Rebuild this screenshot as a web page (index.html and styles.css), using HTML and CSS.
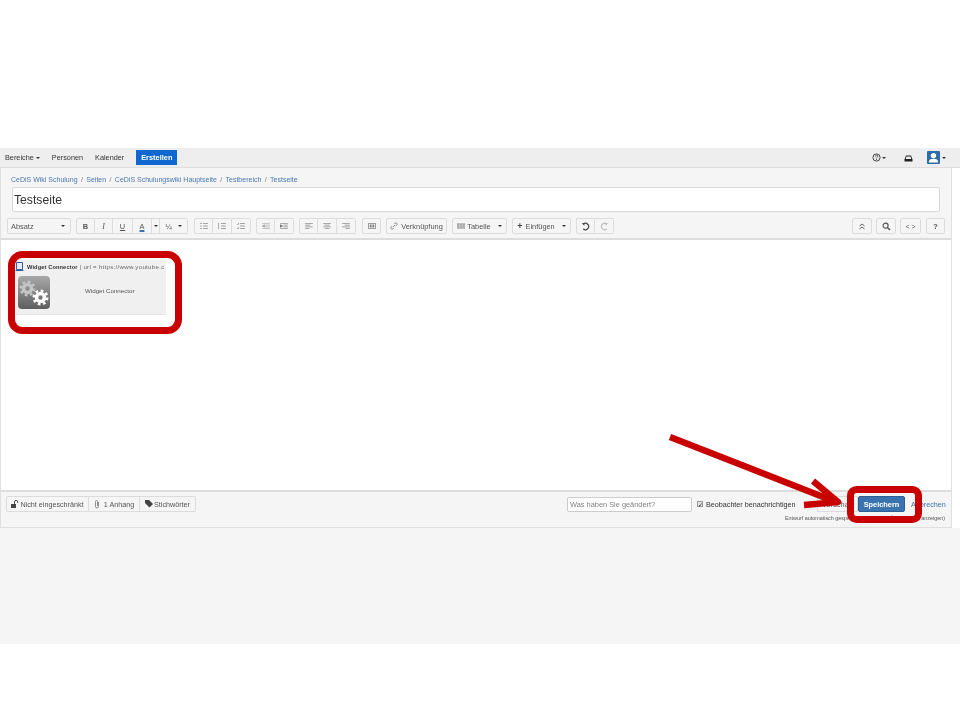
FILE: index.html
```html
<!DOCTYPE html>
<html lang="de">
<head>
<meta charset="utf-8">
<title>Testseite bearbeiten</title>
<link rel="stylesheet" href="styles.css">
</head>
<body>
<div class="top-space"></div>
<div class="app">
  <nav class="nav">
    <a class="nav-item nav-first">Bereiche <i class="caret"></i></a>
    <a class="nav-item">Personen</a>
    <a class="nav-item">Kalender</a>
    <a class="create">Erstellen</a>
    <div class="nav-right">
      <svg class="ic-help" viewBox="0 0 10 10"><circle cx="5" cy="5" r="4" fill="none" stroke="#333" stroke-width="1"/><path d="M3.6 4c0-2 2.9-2 2.9-.3C6.500 4.800 5 4.700 5 6" fill="none" stroke="#333" stroke-width=".9"/><rect x="4.500" y="6.600" width="1" height="1" fill="#333"/></svg>
      <i class="caret"></i>
      <svg class="ic-inbox" viewBox="0 0 9 7"><path d="M2 .5h5l1.500 4v2H.5v-2z" fill="#222"/><path d="M2.500 1.500h4l.8 2.500H1.700z" fill="#eee"/></svg>
      <svg class="ic-user" viewBox="0 0 13 13"><rect width="13" height="13" rx="1" fill="#2d6ca8"/><circle cx="6.500" cy="4.600" r="2.700" fill="#fff"/><path d="M1.800 11.500c0-3.200 2.500-3.800 4.700-3.800s4.700.6 4.700 3.800z" fill="#fff"/></svg>
      <i class="caret"></i>
    </div>
  </nav>
  <main class="editor">
    <div class="head">
      <div class="crumbs">
        <a>CeDiS Wiki Schulung</a><span>/</span><a>Seiten</a><span>/</span><a>CeDiS Schulungswiki Hauptseite</a><span>/</span><a>Testbereich</a><span>/</span><a>Testseite</a>
      </div>
      <div class="title">Testseite</div>
      <div class="toolbar">
        <div class="btn select">Absatz<i class="caret"></i></div>
        <div class="group g-first">
          <div class="btn b19 bold">B</div>
          <div class="btn b18 ital">I</div>
          <div class="btn b20 under">U</div>
          <div class="btn b19 color">A</div>
          <div class="btn b8"><i class="caret"></i></div>
          <div class="btn b28 frac">¼<i class="caret"></i></div>
        </div>
        <div class="group g-list">
          <div class="btn b19"><svg class="tool" viewBox="0 0 9 7"><path d="M0 .5h2M0 3.500h2M0 6.500h2M3.500 .5h5.500M3.500 3.500h5.500M3.500 6.500h5.500" stroke="#707070"/></svg></div>
          <div class="btn b19"><svg class="tool" viewBox="0 0 9 7"><path d="M.5 0v2M.5 2.500v2M.5 5v2M3.500 .5h5.500M3.500 3.500h5.500M3.500 6.500h5.500" stroke="#707070"/></svg></div>
          <div class="btn b19"><svg class="tool" viewBox="0 0 9 7"><path d="M0 1l1 1 1-2M0 6l1 1 1-2M3.500 .5h5.500M3.500 3.500h5.500M3.500 6.500h5.500" stroke="#707070" fill="none"/></svg></div>
        </div>
        <div class="group g-indent">
          <div class="btn b19"><svg class="tool faint" viewBox="0 0 9 7"><path d="M0 .5h9M4 2.500h5M4 4.500h5M0 6.500h9M3 2L0 3.500 3 5z" stroke="#707070" stroke-width=".9"/></svg></div>
          <div class="btn b19"><svg class="tool" viewBox="0 0 9 7"><path d="M0 .5h9M4 2.500h5M4 4.500h5M0 6.500h9M0 2l3 1.500L0 5z" stroke="#707070" stroke-width=".9"/></svg></div>
        </div>
        <div class="group g-align">
          <div class="btn b19"><svg class="tool" viewBox="0 0 9 7"><path d="M0 .5h9M0 2.500h6M0 4.500h9M0 6.500h5" stroke="#808080"/></svg></div>
          <div class="btn b19"><svg class="tool" viewBox="0 0 9 7"><path d="M0 .5h9M1.500 2.500h6M0 4.500h9M2 6.500h5" stroke="#808080"/></svg></div>
          <div class="btn b19"><svg class="tool" viewBox="0 0 9 7"><path d="M0 .5h9M3 2.500h6M0 4.500h9M4 6.500h5" stroke="#808080"/></svg></div>
        </div>
        <div class="btn b19 single g-layout"><svg class="tool" viewBox="0 0 10 8"><rect x=".5" y=".5" width="9" height="7" fill="none" stroke="#666"/><path d="M2 2h2.500v4H2zM5.500 2H8v4H5.500z" fill="#666"/></svg></div>
        <div class="btn single link"><svg class="tool-s" viewBox="0 0 8 8"><path d="M3 5l2-2M2.200 4L1 5.200a1.300 1.300 0 0 0 1.800 1.800L4 5.800M4 2.200L5.200 1A1.300 1.300 0 0 1 7 2.800L5.800 4" fill="none" stroke="#666" stroke-width=".7"/></svg>Verknüpfung</div>
        <div class="btn single table"><svg class="tool" viewBox="0 0 9 6"><path d="M0 0h9v6H0z" fill="#8a8a8a"/><path d="M3 0v6M6 0v6M0 2h9M0 4h9" stroke="#eee" stroke-width=".4"/></svg>Tabelle<i class="caret"></i></div>
        <div class="btn single insert"><b>+</b>Einfügen<i class="caret"></i></div>
        <div class="group g-undo">
          <div class="btn b19"><svg class="tool-u" viewBox="0 0 10 10"><path d="M2.500 2.500a3.500 3.500 0 1 1 0 5" fill="none" stroke="#444" stroke-width="1.300"/><path d="M1 1l3 .2-.4 3z" fill="#444"/></svg></div>
          <div class="btn b19"><svg class="tool-u" viewBox="0 0 10 10"><path d="M7.500 2.500a3.500 3.500 0 1 0 0 5" fill="none" stroke="#bbb" stroke-width="1.200"/><path d="M9 1l-3 .2.400 3z" fill="#bbb"/></svg></div>
        </div>
        <div class="tool-right">
          <div class="btn b20 single"><svg class="tool-s" viewBox="0 0 8 8"><path d="M1.500 4L4 2l2.500 2M1.500 7L4 5l2.500 2" fill="none" stroke="#666"/></svg></div>
          <div class="btn b20 single"><svg class="tool-u" viewBox="0 0 10 10"><circle cx="4" cy="4" r="2.800" fill="none" stroke="#555" stroke-width="1.300"/><path d="M6 6l3 3" stroke="#555" stroke-width="1.600"/></svg></div>
          <div class="btn b21 single code">&lt; &gt;</div>
          <div class="btn b19 single help">?</div>
        </div>
      </div>
    </div>
    <div class="content">
      <div class="macro">
        <div class="macro-head">
          <svg class="macro-book" viewBox="0 0 9 9"><path d="M1.500 .5h6v7h-6z" fill="#e8eef6" stroke="#2f5f9e"/><path d="M.5 8.500h8" stroke="#2f5f9e"/></svg>
          <span class="macro-text"><b>Widget Connector</b> | url = https://www.youtube.c</span>
        </div>
        <div class="macro-body">
          <svg class="macro-icon" viewBox="0 0 32 33">
            <defs><linearGradient id="grad" x1="0" y1="0" x2="0" y2="1"><stop offset="0" stop-color="#a9a9a9"/><stop offset="1" stop-color="#5e5e5e"/></linearGradient></defs>
            <rect width="32" height="33" rx="4" fill="url(#grad)"/>
            <circle cx="9.500" cy="12.500" r="4" fill="none" stroke="#c4c4c4" stroke-width="3.600"/>
            <circle cx="9.500" cy="12.500" r="6.800" fill="none" stroke="#c4c4c4" stroke-width="2.400" stroke-dasharray="2.700 2.640"/>
            <circle cx="22.500" cy="21.500" r="4" fill="none" stroke="#fff" stroke-width="3.600"/>
            <circle cx="22.500" cy="21.500" r="6.800" fill="none" stroke="#fff" stroke-width="2.400" stroke-dasharray="2.700 2.640"/>
          </svg>
          <span class="macro-name">Widget Connector</span>
        </div>
      </div>
    </div>
    <footer class="foot">
      <div class="foot-left">
        <div class="btn f-restrict"><svg class="tool-s" viewBox="0 0 8 8"><path d="M0 4h5v4H0z" fill="#444"/><path d="M3.500 4V2a1.600 1.600 0 0 1 3.200 0v1" fill="none" stroke="#555"/></svg>Nicht eingeschränkt</div>
        <div class="btn f-attach"><svg class="tool-clip" viewBox="0 0 6 10"><path d="M4.500 3v4.500a1.500 1.500 0 0 1-3 0V2.500a1 1 0 0 1 2 0V7" fill="none" stroke="#777" stroke-width=".8"/></svg>1 Anhang</div>
        <div class="btn f-labels"><svg class="tool-s" viewBox="0 0 8 8"><path d="M0 0h4l4 4-3.500 3.500L0 3z" fill="#444"/></svg>Stichwörter</div>
      </div>
      <div class="foot-right">
        <div class="actions">
          <div class="comment">Was haben Sie geändert?</div>
          <span class="check">✓</span>
          <span class="notify">Beobachter benachrichtigen</span>
          <div class="btn preview">Vorschau</div>
          <div class="save">Speichern</div>
          <a class="cancel">Abbrechen</a>
        </div>
        <div class="draft">Entwurf automatisch gespeichert um 14:32 (Änderungen anzeigen)</div>
      </div>
    </footer>
  </main>
  <div class="below"></div>
</div>
<svg class="marks" viewBox="0 0 960 720">
  <rect x="11.500" y="254.500" width="167" height="76" rx="11" fill="none" stroke="#c80000" stroke-width="7"/>
  <path d="M670 437L836 502M813 481L838 502L804 505" fill="none" stroke="#c80000" stroke-width="6.500" stroke-linejoin="round"/>
  <rect x="850.500" y="489.500" width="68" height="30" rx="6" fill="none" stroke="#c80000" stroke-width="7"/>
</svg>
</body>
</html>
```

FILE: styles.css
```css
* { box-sizing: border-box; }
html, body { margin: 0; padding: 0; background: #fff; }
body {
  position: relative;
  height: 720px;
  overflow: hidden;
  font-family: "Liberation Sans", Arial, sans-serif;
  font-size: 7.4px;
  color: #333;
}
a { color: #3b73af; }
.top-space { height: 148px; }
.app { filter: blur(.25px); }
.below { height: 116px; background: #f5f5f5; }

.nav {
  display: flex;
  align-items: center;
  height: 20px;
  background: #eeeeee;
  border-bottom: 1px solid #dddddd;
}
.nav-item { color: #333; margin-right: 12px; white-space: nowrap; font-size: 7.3px; }
.nav-first { margin-left: 5px; }
.caret {
  display: inline-block;
  width: 0;
  height: 0;
  border-left: 2px solid transparent;
  border-right: 2px solid transparent;
  border-top: 2px solid #333;
  vertical-align: middle;
}
.create {
  display: flex;
  align-items: center;
  justify-content: center;
  width: 41px;
  height: 15px;
  background: #0f68cf;
  color: #fff;
  font-weight: bold;
}
.nav-right { display: flex; align-items: center; margin-left: auto; padding-right: 14px; }
.ic-help { width: 9px; height: 9px; margin-right: 1px; }
.ic-inbox { width: 9px; height: 7px; margin: 2px 14px 0 18px; }
.ic-user { width: 13px; height: 13px; margin-right: 2px; }

.editor {
  width: 952px;
  height: 360px;
  background: #f5f5f5;
  border: solid #e0e0e0;
  border-width: 0 1px 1px 1px;
  display: flex;
  flex-direction: column;
}
.head { height: 72px; border-bottom: 2px solid #dddddd; padding: 5px 5px 0 6px; }
.crumbs { display: flex; gap: 3.4px; height: 12px; align-items: center; padding-left: 4px; color: #777; white-space: nowrap; font-size: 7px; }
.crumbs a { color: #4a78ad; }
.title {
  margin: 2px 4px 0 5px;
  width: 928px;
  height: 25px;
  background: #fff;
  border: 1px solid #d8d8d8;
  border-radius: 2px;
  font-size: 12.2px;
  line-height: 25px;
  padding-left: 1px;
  color: #333;
}
.toolbar { display: flex; align-items: center; margin-top: 6px; height: 16px; }
.btn {
  display: flex;
  align-items: center;
  justify-content: center;
  height: 16px;
  background: #f5f5f5;
  border: 1px solid #dcdcdc;
  color: #555;
  white-space: nowrap;
}
.single, .select { border-radius: 2px; }
.group { display: flex; }
.group .btn { border-left-width: 0; }
.group .btn:first-child { border-left-width: 1px; border-radius: 2px 0 0 2px; }
.group .btn:last-child { border-radius: 0 2px 2px 0; }
.b8 { width: 8px; }
.b18 { width: 18px; }
.b19 { width: 19px; }
.b20 { width: 20px; }
.b21 { width: 21px; }
.b28 { width: 28px; }
.select { width: 64px; justify-content: space-between; padding: 0 5px 0 3px; }
.g-first { margin-left: 5px; }
.g-list { margin-left: 6px; }
.g-indent { margin-left: 5px; }
.g-align { margin-left: 5px; }
.g-layout { margin-left: 6px; }
.g-undo { margin-left: 5px; }
.link { width: 61px; margin-left: 5px; gap: 2px; }
.table { width: 55px; margin-left: 5px; gap: 2px; }
.table .caret { margin-left: 5px; }
.insert { width: 59px; margin-left: 5px; gap: 3px; }
.insert b { font-size: 9px; color: #444; line-height: 8px; }
.insert .caret { margin-left: 4px; }
.bold { font-weight: bold; }
.ital { font-style: italic; font-family: "Liberation Serif", serif; font-size: 8px; }
.under { text-decoration: underline; }
.color { text-decoration: underline 2px #3b73af; }
.frac { gap: 6px; }
.code { font-size: 6.5px; margin-right: 1px; }
.help { font-weight: bold; }
.tool { width: 8px; height: 6px; opacity: .8; }
.tool-s { width: 8px; height: 8px; margin-right: 1px; }
.tool-u { width: 9px; height: 9px; }
.tool-clip { width: 6px; height: 10px; margin-right: 4px; }
.faint { opacity: .5; }
.tool-right { display: flex; gap: 4px; margin-left: auto; padding-right: 1px; }

.content { height: 250px; background: #fff; padding: 20px 0 0 15px; }
.macro { width: 150px; height: 55px; background: #f0f0f0; border-bottom: 1px solid #e6e6e6; }
.macro-head { display: flex; align-items: center; height: 13px; margin-left: -1px; white-space: nowrap; }
.macro-book { width: 9px; height: 9px; flex: none; margin-right: 3px; }
.macro-text { font-size: 6.1px; color: #666; letter-spacing: .3px; }
.macro-text b { color: #333; font-size: 5.7px; letter-spacing: .1px; }
.macro-body { display: flex; align-items: flex-start; padding: 3px 0 0 2px; }
.macro-icon { width: 32px; height: 33px; flex: none; }
.macro-name { font-size: 6.2px; color: #555; margin: 11px 0 0 35px; }

.foot {
  flex: 1;
  display: flex;
  justify-content: space-between;
  border-top: 2px solid #dddddd;
  padding: 4px 6px 0 5px;
}
.foot-left { display: flex; height: 16px; font-size: 7.2px; }
.foot-left .btn { border-left-width: 0; }
.foot-left .btn:first-child { border-left-width: 1px; border-radius: 2px 0 0 2px; }
.foot-left .btn:last-child { border-radius: 0 2px 2px 0; }
.f-restrict { width: 83px; }
.f-attach { width: 51px; }
.f-labels { width: 56px; }
.foot-right { display: flex; flex-direction: column; align-items: flex-end; }
.actions { display: flex; align-items: center; height: 16px; }
.comment {
  width: 125px;
  height: 15px;
  background: #fff;
  border: 1px solid #ccc;
  border-radius: 2px;
  color: #808080;
  line-height: 13px;
  padding-left: 2px;
}
.check {
  display: flex;
  align-items: center;
  justify-content: center;
  width: 6px;
  height: 6px;
  margin: 0 3px 0 5px;
  background: #e4e4e4;
  border: 1px solid #999;
  font-size: 6px;
  color: #222;
}
.notify { color: #333; width: 111px; white-space: nowrap; font-size: 7.2px; }
.preview { width: 41px; }
.save {
  display: flex;
  align-items: center;
  justify-content: center;
  width: 47px;
  height: 16px;
  background: #3b73af;
  border: 1px solid #2d5f96;
  border-radius: 2px;
  color: #fff;
  font-weight: bold;
}
.cancel { width: 34px; margin-left: 6px; white-space: nowrap; font-size: 7.2px; }
.draft { font-size: 5.4px; color: #555; margin-top: 3px; white-space: nowrap; }

.marks { position: absolute; left: 0; top: 0; width: 960px; height: 720px; pointer-events: none; }
```
